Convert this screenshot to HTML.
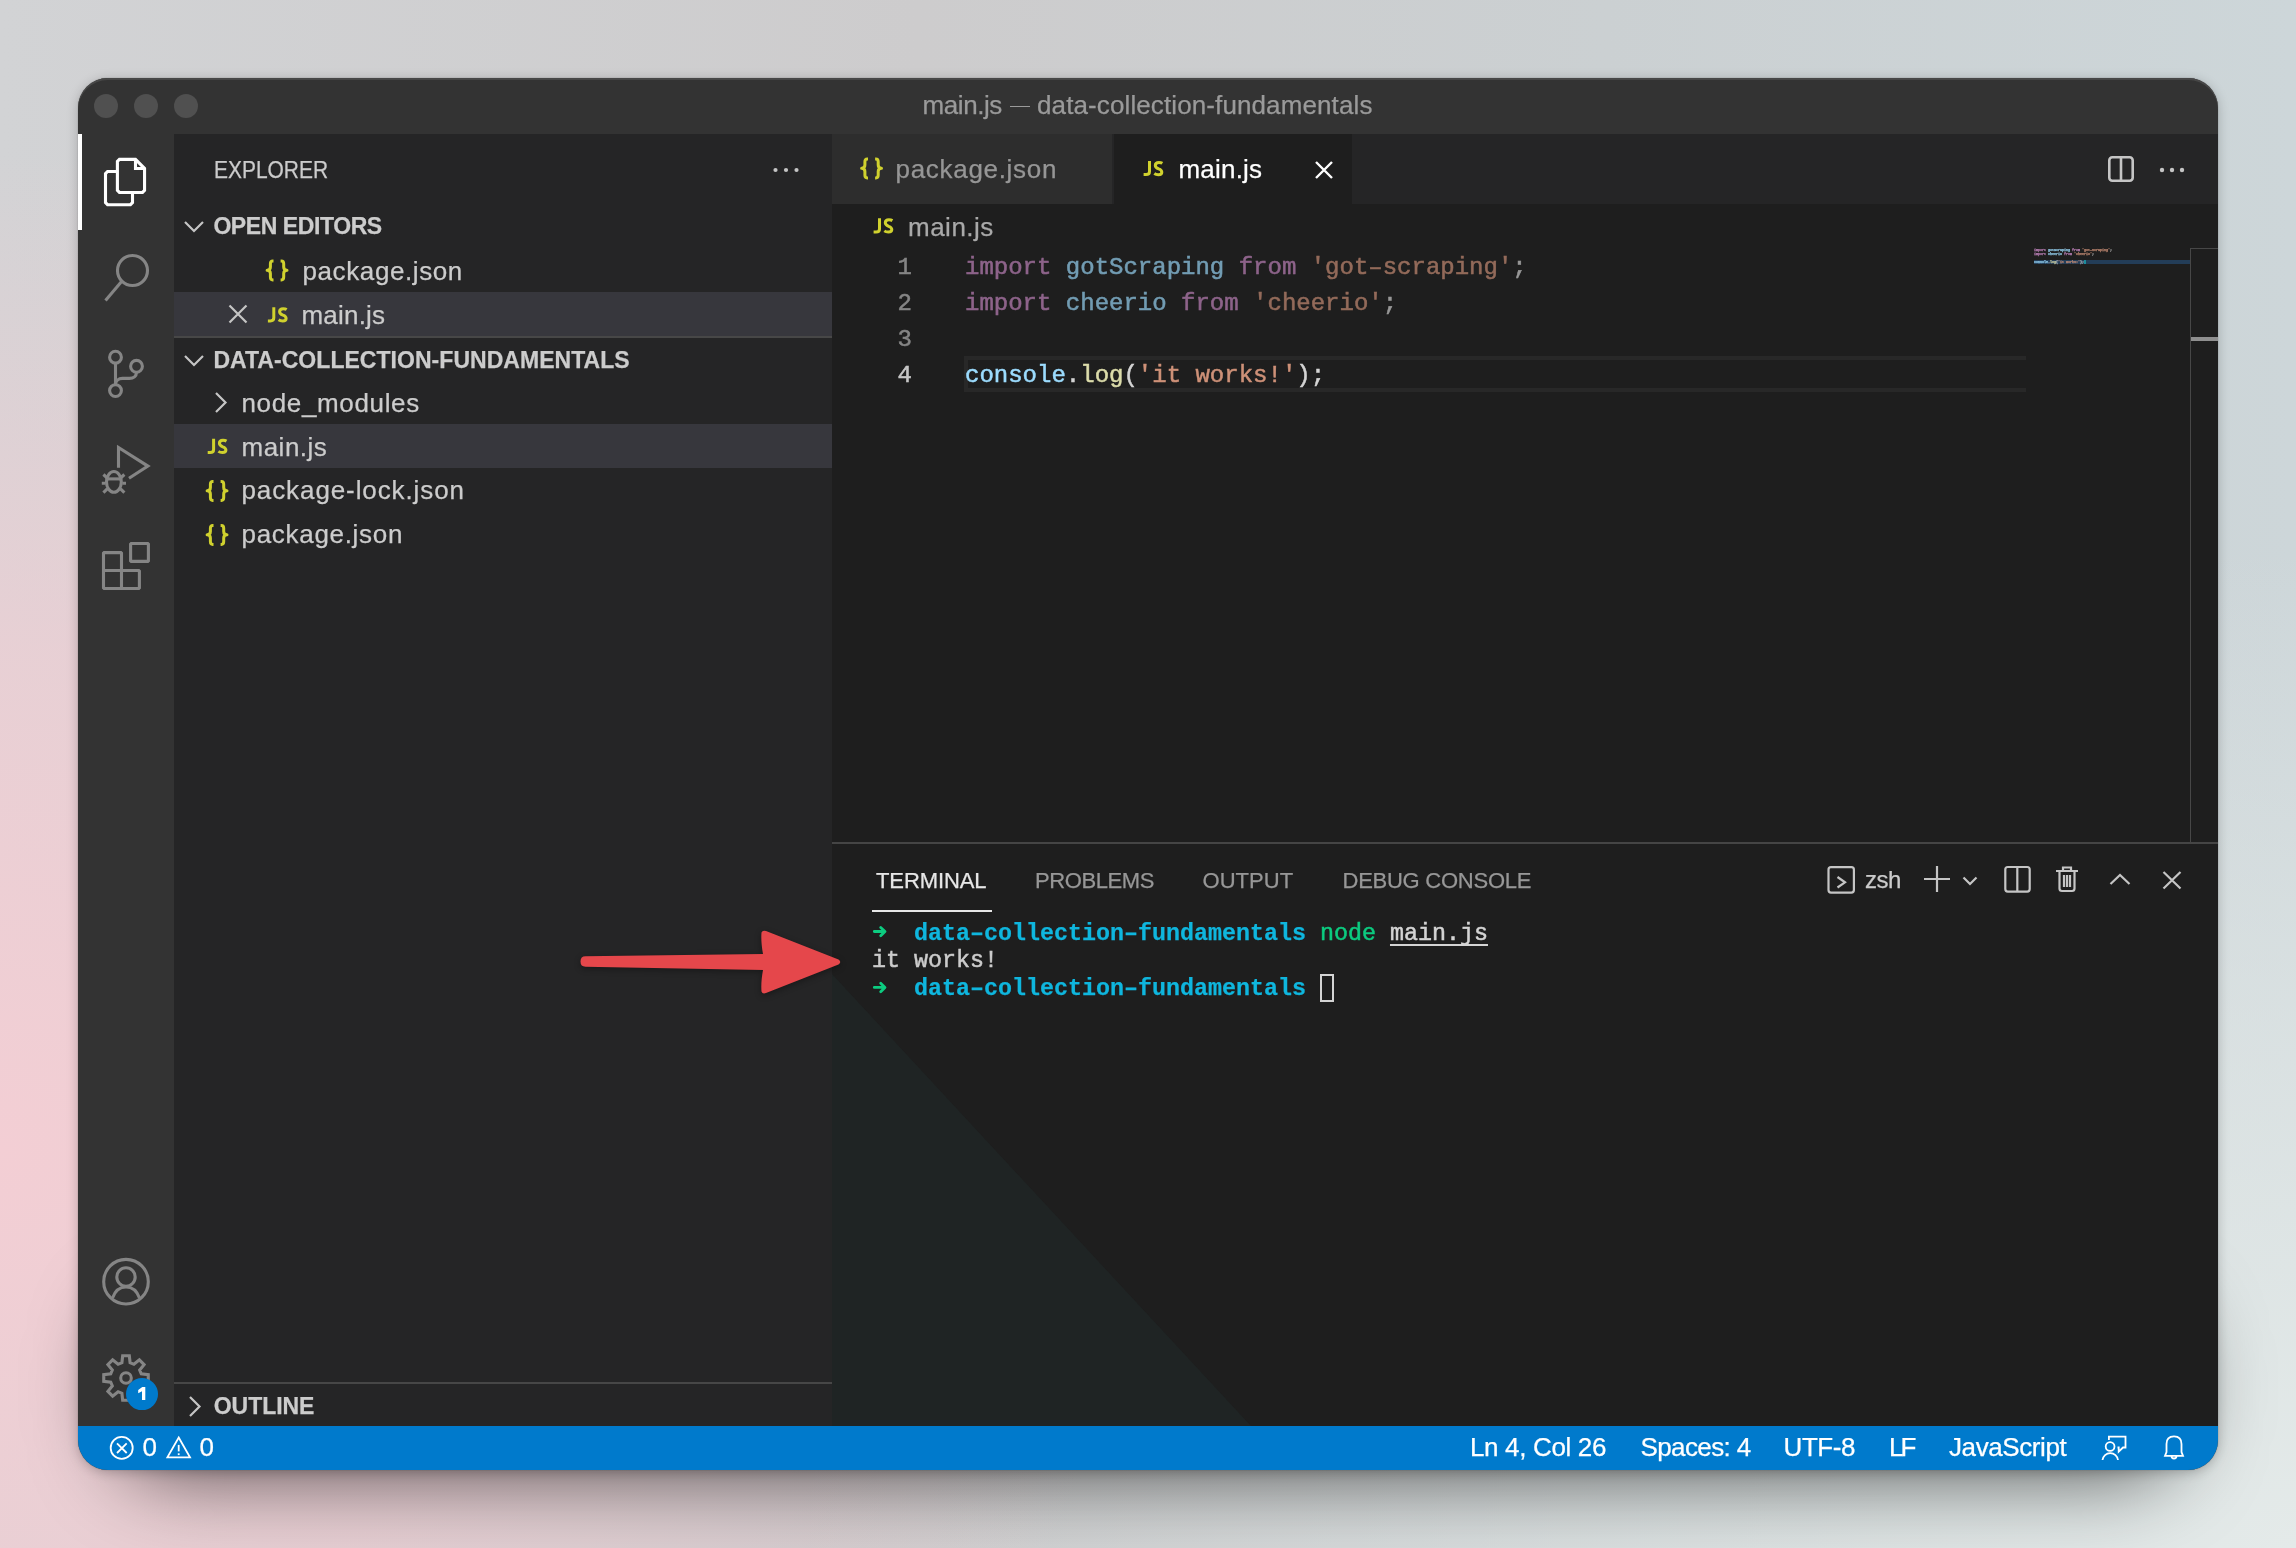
<!DOCTYPE html>
<html><head><meta charset="utf-8"><style>
html,body{margin:0;padding:0;width:2296px;height:1548px;overflow:hidden;}
body{position:relative;background:#d4d4d6;font-family:"Liberation Sans", sans-serif;}
.t{position:absolute;white-space:pre;-webkit-text-stroke:0.25px;}
.r{position:absolute;}
#bg{position:absolute;left:0;top:0;width:2296px;height:1548px;
 background:
  radial-gradient(ellipse 1150px 1000px at 0px 1150px, rgba(243,206,212,1) 0%, rgba(243,206,212,0.65) 50%, rgba(243,206,212,0) 100%),
  radial-gradient(ellipse 1500px 1000px at 2296px 1548px, rgba(228,234,233,1) 0%, rgba(228,234,233,0.55) 50%, rgba(228,234,233,0) 100%),
  linear-gradient(90deg, #d2d3d5 0%, #cdcccd 40%, #cbd0d2 70%, #cdd6d9 100%);}
#shadow{position:absolute;left:78px;top:78px;width:2140px;height:1392px;border-radius:30px;
 box-shadow:0 2px 12px rgba(0,0,0,0.22), 0 0 1px rgba(0,0,0,0.5);}
#shadow2{position:absolute;left:115px;top:1300px;width:2066px;height:175px;border-radius:60px;background:rgba(0,0,0,0.62);filter:blur(42px);}
#win{position:absolute;left:78px;top:78px;width:2140px;height:1392px;border-radius:30px;overflow:hidden;background:#333333;}
#inner{position:absolute;left:-78px;top:-78px;width:2296px;height:1548px;will-change:transform;}
svg{position:absolute;left:0;top:0;}
</style></head><body>
<div id="bg"></div>
<div id="shadow2"></div>
<div id="shadow"></div>
<div id="win"><div id="inner">
<div class="r" style="left:78px;top:78px;width:2140px;height:56px;background:#333333;"></div>
<div class="r" style="left:78px;top:134px;width:96px;height:1292px;background:#333333;"></div>
<div class="r" style="left:174px;top:134px;width:658px;height:1292px;background:#252526;"></div>
<div class="r" style="left:832px;top:134px;width:1386px;height:70px;background:#252526;"></div>
<div class="r" style="left:832px;top:134px;width:280px;height:70px;background:#2d2d2d;"></div>
<div class="r" style="left:1114px;top:134px;width:238px;height:70px;background:#1e1e1e;"></div>
<div class="r" style="left:832px;top:204px;width:1386px;height:638px;background:#1e1e1e;"></div>
<div class="r" style="left:832px;top:842px;width:1386px;height:2px;background:#454545;"></div>
<div class="r" style="left:832px;top:844px;width:1386px;height:582px;background:#1e1e1e;"></div>
<div class="r" style="left:78px;top:1426px;width:2140px;height:44px;background:#007acc;"></div>
<div class="r" style="left:78px;top:134px;width:4px;height:96px;background:#ffffff;"></div>
<div class="r" style="left:174px;top:292px;width:658px;height:44px;background:#37373d;"></div>
<div class="r" style="left:174px;top:424px;width:658px;height:44px;background:#37373d;"></div>
<div class="r" style="left:174px;top:336px;width:658px;height:2px;background:#474747;"></div>
<div class="r" style="left:174px;top:1382px;width:658px;height:2px;background:#474747;"></div>
<div class="r" style="left:964px;top:356px;width:1062px;height:36px;box-sizing:border-box;border:4px solid #282828;border-right:none;"></div>
<svg width="2296" height="1548"><polygon points="832,974 832,1426 1251,1426" fill="#1f2424"/></svg>
<div class="r" style="left:2190px;top:248px;width:1px;height:594px;background:#474747;"></div>
<div class="r" style="left:2190px;top:248px;width:28px;height:1px;background:#474747;"></div>
<div class="r" style="left:2191px;top:337px;width:27px;height:4px;background:#8f8f8f;"></div>
<div class="r" style="left:2034px;top:260px;width:156px;height:4px;background:#233d58;"></div>
<div class="t" style="left:922.60px;top:91.59px;font-size:26px;line-height:26px;color:#9a9a9a;font-weight:400;font-family:'Liberation Sans', sans-serif;letter-spacing:-0.43px;">main.js</div>
<div class="t" style="left:1037.00px;top:91.59px;font-size:26px;line-height:26px;color:#9a9a9a;font-weight:400;font-family:'Liberation Sans', sans-serif;letter-spacing:0.11px;">data-collection-fundamentals</div>
<div class="r" style="left:1010px;top:105.6px;width:19.59999999999991px;height:1.8000000000000114px;background:#9a9a9a;"></div>
<div class="t" style="left:213.80px;top:158.93px;font-size:23px;line-height:23px;color:#cccccc;font-weight:400;font-family:'Liberation Sans', sans-serif;letter-spacing:0.0px;transform:scaleX(0.91);transform-origin:0 0;">EXPLORER</div>
<div class="t" style="left:213.40px;top:215.13px;font-size:23px;line-height:23px;color:#cccccc;font-weight:700;font-family:'Liberation Sans', sans-serif;letter-spacing:-0.42px;">OPEN EDITORS</div>
<div class="t" style="left:302.50px;top:258.49px;font-size:26px;line-height:26px;color:#cccccc;font-weight:400;font-family:'Liberation Sans', sans-serif;letter-spacing:0.6px;">package.json</div>
<div class="t" style="left:301.50px;top:301.99px;font-size:26px;line-height:26px;color:#cccccc;font-weight:400;font-family:'Liberation Sans', sans-serif;letter-spacing:0.2px;">main.js</div>
<div class="t" style="left:213.40px;top:348.63px;font-size:23px;line-height:23px;color:#cccccc;font-weight:700;font-family:'Liberation Sans', sans-serif;letter-spacing:0.04px;">DATA-COLLECTION-FUNDAMENTALS</div>
<div class="t" style="left:241.50px;top:389.99px;font-size:26px;line-height:26px;color:#cccccc;font-weight:400;font-family:'Liberation Sans', sans-serif;letter-spacing:0.65px;">node_modules</div>
<div class="t" style="left:241.50px;top:433.99px;font-size:26px;line-height:26px;color:#cccccc;font-weight:400;font-family:'Liberation Sans', sans-serif;letter-spacing:0.5px;">main.js</div>
<div class="t" style="left:241.50px;top:477.49px;font-size:26px;line-height:26px;color:#cccccc;font-weight:400;font-family:'Liberation Sans', sans-serif;letter-spacing:0.9px;">package-lock.json</div>
<div class="t" style="left:241.50px;top:521.49px;font-size:26px;line-height:26px;color:#cccccc;font-weight:400;font-family:'Liberation Sans', sans-serif;letter-spacing:0.7px;">package.json</div>
<div class="t" style="left:213.70px;top:1394.53px;font-size:23px;line-height:23px;color:#cccccc;font-weight:700;font-family:'Liberation Sans', sans-serif;letter-spacing:-0.03px;">OUTLINE</div>
<div class="t" style="left:895.50px;top:155.99px;font-size:26px;line-height:26px;color:#969696;font-weight:400;font-family:'Liberation Sans', sans-serif;letter-spacing:0.7px;">package.json</div>
<div class="t" style="left:1178.50px;top:155.99px;font-size:26px;line-height:26px;color:#ffffff;font-weight:400;font-family:'Liberation Sans', sans-serif;letter-spacing:0.2px;">main.js</div>
<div class="t" style="left:908.00px;top:213.59px;font-size:26px;line-height:26px;color:#a9a9a9;font-weight:400;font-family:'Liberation Sans', sans-serif;letter-spacing:0.5px;">main.js</div>
<div class="t" style="left:897.50px;top:256.10px;font-size:24px;line-height:24px;color:#858585;font-weight:400;font-family:'Liberation Mono', monospace;letter-spacing:0.0px;-webkit-text-stroke:0.5px;">1</div>
<div class="t" style="left:897.50px;top:292.10px;font-size:24px;line-height:24px;color:#858585;font-weight:400;font-family:'Liberation Mono', monospace;letter-spacing:0.0px;-webkit-text-stroke:0.5px;">2</div>
<div class="t" style="left:897.50px;top:328.10px;font-size:24px;line-height:24px;color:#858585;font-weight:400;font-family:'Liberation Mono', monospace;letter-spacing:0.0px;-webkit-text-stroke:0.5px;">3</div>
<div class="t" style="left:897.50px;top:364.10px;font-size:24px;line-height:24px;color:#c6c6c6;font-weight:400;font-family:'Liberation Mono', monospace;letter-spacing:0.0px;-webkit-text-stroke:0.5px;">4</div>
<div class="t" style="left:965.00px;top:256.10px;font-size:24px;line-height:24px;color:#D4D4D4;font-weight:400;font-family:'Liberation Mono', monospace;letter-spacing:0.0px;opacity:0.667;-webkit-text-stroke:0.5px;"><span style="color:#C586C0">import</span> <span style="color:#9CDCFE">gotScraping</span> <span style="color:#C586C0">from</span> <span style="color:#CE9178">'got–scraping'</span><span style="color:#D4D4D4">;</span></div>
<div class="t" style="left:965.00px;top:292.10px;font-size:24px;line-height:24px;color:#D4D4D4;font-weight:400;font-family:'Liberation Mono', monospace;letter-spacing:0.0px;opacity:0.667;-webkit-text-stroke:0.5px;"><span style="color:#C586C0">import</span> <span style="color:#9CDCFE">cheerio</span> <span style="color:#C586C0">from</span> <span style="color:#CE9178">'cheerio'</span><span style="color:#D4D4D4">;</span></div>
<div class="t" style="left:965.00px;top:364.10px;font-size:24px;line-height:24px;color:#D4D4D4;font-weight:400;font-family:'Liberation Mono', monospace;letter-spacing:0.0px;-webkit-text-stroke:0.5px;"><span style="color:#9CDCFE">console</span><span style="color:#D4D4D4">.</span><span style="color:#DCDCAA">log</span><span style="color:#D4D4D4">(</span><span style="color:#CE9178">'it works!'</span><span style="color:#D4D4D4">);</span></div>
<div class="t" style="left:876.00px;top:869.88px;font-size:22px;line-height:22px;color:#e7e7e7;font-weight:400;font-family:'Liberation Sans', sans-serif;letter-spacing:-0.1px;">TERMINAL</div>
<div class="t" style="left:1035.00px;top:869.88px;font-size:22px;line-height:22px;color:#979797;font-weight:400;font-family:'Liberation Sans', sans-serif;letter-spacing:-0.4px;">PROBLEMS</div>
<div class="t" style="left:1202.50px;top:869.88px;font-size:22px;line-height:22px;color:#979797;font-weight:400;font-family:'Liberation Sans', sans-serif;letter-spacing:0.05px;">OUTPUT</div>
<div class="t" style="left:1342.50px;top:869.88px;font-size:22px;line-height:22px;color:#979797;font-weight:400;font-family:'Liberation Sans', sans-serif;letter-spacing:-0.25px;">DEBUG CONSOLE</div>
<div class="r" style="left:872px;top:910px;width:120px;height:2px;background:#e7e7e7;"></div>
<div class="t" style="left:1865.00px;top:868.08px;font-size:24px;line-height:24px;color:#cccccc;font-weight:400;font-family:'Liberation Sans', sans-serif;letter-spacing:-0.5px;">zsh</div>
<div class="t" style="left:872.00px;top:922.62px;font-size:23.33px;line-height:23.33px;color:#cccccc;font-weight:700;font-family:'Liberation Mono', monospace;letter-spacing:0.0px;">   <span style="color:#0fb6de">data–collection–fundamentals</span> <span style="color:#0ccc80;font-weight:400;-webkit-text-stroke:0.5px">node</span> <span style="color:#d4d4d4;font-weight:400;-webkit-text-stroke:0.5px;text-decoration:underline;text-decoration-thickness:2px;text-underline-offset:4px;text-decoration-skip-ink:none">main.js</span></div>
<div class="t" style="left:872.00px;top:950.12px;font-size:23.33px;line-height:23.33px;color:#cccccc;font-weight:400;font-family:'Liberation Mono', monospace;letter-spacing:0.0px;-webkit-text-stroke:0.5px;">it works!</div>
<div class="t" style="left:872.00px;top:978.12px;font-size:23.33px;line-height:23.33px;color:#cccccc;font-weight:700;font-family:'Liberation Mono', monospace;letter-spacing:0.0px;">   <span style="color:#0fb6de">data–collection–fundamentals</span> </div>
<div class="r" style="left:1320px;top:974px;width:14px;height:28px;box-sizing:border-box;border:2px solid #d4d4d4;"></div>
<svg width="2296" height="1548" fill="none" stroke="#0ccc80" stroke-width="2.8" stroke-linecap="round" stroke-linejoin="round"><path d="M874.3 931.5 H884.5 M880.7 927.4 L885 931.5 L880.7 935.8"/><path d="M874.3 987.4 H884.5 M880.7 983.3 L885 987.4 L880.7 991.7"/></svg>
<div class="t" style="left:142.50px;top:1434.49px;font-size:26px;line-height:26px;color:#ffffff;font-weight:400;font-family:'Liberation Sans', sans-serif;letter-spacing:0.0px;">0</div>
<div class="t" style="left:199.50px;top:1434.49px;font-size:26px;line-height:26px;color:#ffffff;font-weight:400;font-family:'Liberation Sans', sans-serif;letter-spacing:0.0px;">0</div>
<div class="t" style="left:1470.00px;top:1434.49px;font-size:26px;line-height:26px;color:#ffffff;font-weight:400;font-family:'Liberation Sans', sans-serif;letter-spacing:-0.35px;">Ln 4, Col 26</div>
<div class="t" style="left:1640.50px;top:1434.49px;font-size:26px;line-height:26px;color:#ffffff;font-weight:400;font-family:'Liberation Sans', sans-serif;letter-spacing:-0.6px;">Spaces: 4</div>
<div class="t" style="left:1783.50px;top:1434.49px;font-size:26px;line-height:26px;color:#ffffff;font-weight:400;font-family:'Liberation Sans', sans-serif;letter-spacing:-0.4px;">UTF-8</div>
<div class="t" style="left:1889.00px;top:1434.49px;font-size:26px;line-height:26px;color:#ffffff;font-weight:400;font-family:'Liberation Sans', sans-serif;letter-spacing:-3px;">LF</div>
<div class="t" style="left:1949.00px;top:1434.49px;font-size:26px;line-height:26px;color:#ffffff;font-weight:400;font-family:'Liberation Sans', sans-serif;letter-spacing:-0.4px;">JavaScript</div>
<svg width="2296" height="1548" fill="none" stroke-linecap="butt" stroke-linejoin="miter"><circle cx="106" cy="106" r="12" fill="#505050"/><circle cx="146" cy="106" r="12" fill="#505050"/><circle cx="186" cy="106" r="12" fill="#505050"/><g stroke="#ffffff" stroke-width="3.1"><path d="M117.4 161.4 L119.45 159.35 L135.5 159.35 L144.55 168.4 L144.55 190.4 L142.5 192.45 L119.45 192.45 L117.4 190.4 Z"/><path d="M135.5 159.35 L135.5 168.5 L144.55 168.5"/><path d="M117.4 171.5 L107.55 171.5 L105.5 173.55 L105.5 202.65 L107.55 204.7 L130.45 204.7 L132.5 202.65 L132.5 192.45"/></g><g stroke="#858585" stroke-width="3.1"><circle cx="132.5" cy="270.5" r="15"/><path d="M122 281 L105.5 300.5"/><circle cx="115.5" cy="357.2" r="5.9"/><circle cx="136.5" cy="366.3" r="5.9"/><circle cx="115.5" cy="390.6" r="5.9"/><path d="M115.5 363.1 L115.5 384.7"/><path d="M136.5 372.2 C136.5 376.2 133.5 378.4 129.5 378.4 L122.5 378.4 C118.5 378.4 115.5 381 115.5 384.7"/><path d="M118.5 467.8 L118.5 447.5 L147.9 466.1 L129 478.3"/><ellipse cx="113.9" cy="481.9" rx="7.4" ry="10.4"/><path d="M106.5 478.9 L121.3 478.9"/><path d="M103.4 474.5 L107.8 478.5 M124.4 474.5 L120 478.5 M101.8 483.3 L105.5 483.3 M122.3 483.3 L126 483.3 M103.4 492.6 L107.5 488.6 M124.4 492.6 L120.3 488.6"/><g stroke-linejoin="bevel"><path d="M103.5 552.6 L121.5 552.6 L121.5 570.5 L139.4 570.5 L139.4 588.5 L103.5 588.5 Z M103.5 570.5 L121.5 570.5 M121.5 570.5 L121.5 588.5"/><rect x="130.6" y="543.5" width="17.8" height="17.9"/></g><circle cx="126" cy="1281.7" r="22.3"/><circle cx="126" cy="1277" r="9.2"/><path d="M112.5 1298 C115 1291 120 1287 126 1287 C132 1287 137 1291 139.5 1298"/><polygon points="121.91,1362.74 122.67,1355.75 129.33,1355.75 130.09,1362.74 133.90,1364.32 139.38,1359.91 144.09,1364.62 139.68,1370.10 141.26,1373.91 148.25,1374.67 148.25,1381.33 141.26,1382.09 139.68,1385.90 144.09,1391.38 139.38,1396.09 133.90,1391.68 130.09,1393.26 129.33,1400.25 122.67,1400.25 121.91,1393.26 118.10,1391.68 112.62,1396.09 107.91,1391.38 112.32,1385.90 110.74,1382.09 103.75,1381.33 103.75,1374.67 110.74,1373.91 112.32,1370.10 107.91,1364.62 112.62,1359.91 118.10,1364.32"/><circle cx="126" cy="1378" r="5.3"/></g><circle cx="142" cy="1394.1" r="16" fill="#007acc"/><g stroke="#c5c5c5" stroke-width="2.2"><path d="M185 222 L194 231 L203 222"/><path d="M185 356 L194 365 L203 356"/><path d="M216 393 L225.5 402.5 L216 412"/><path d="M190 1397 L199.5 1406.5 L190 1416"/><path d="M229.5 305.5 L246.5 322.5 M246.5 305.5 L229.5 322.5"/></g><circle cx="775.5" cy="170" r="2.1" fill="#c5c5c5"/><circle cx="786" cy="170" r="2.1" fill="#c5c5c5"/><circle cx="796.5" cy="170" r="2.1" fill="#c5c5c5"/><g stroke="#c5c5c5" stroke-width="2.6"><rect x="2109.3" y="157.3" width="23.4" height="23.4" rx="3"/><path d="M2121 157.3 V180.7"/></g><circle cx="2162" cy="170" r="2.2" fill="#c5c5c5"/><circle cx="2172" cy="170" r="2.2" fill="#c5c5c5"/><circle cx="2182" cy="170" r="2.2" fill="#c5c5c5"/><path d="M1316 162 L1332 178 M1332 162 L1316 178" stroke="#ffffff" stroke-width="2.4"/><g stroke="#c5c5c5" stroke-width="2.2"><rect x="1828.5" y="867.2" width="25.4" height="25.4" rx="2.5"/><path d="M1837.5 877 L1845 882.3 L1837.5 887.5"/><path d="M1924 879 H1950 M1937 866 V892"/><path d="M1963.5 877.5 L1970 884 L1976.5 877.5"/><rect x="2005.3" y="867" width="24.4" height="24.6" rx="2.5"/><path d="M2017.3 867 V891.6"/><path d="M2056 871 H2078 M2063 871 V867.5 H2071 V871 M2059.5 871 V888.5 Q2059.5 891 2062 891 H2072 Q2074.5 891 2074.5 888.5 V871 M2064 875 V887 M2067 875 V887 M2070 875 V887"/><path d="M2110.5 884 L2120 875 L2129.5 884"/><path d="M2163.5 872 L2180.5 888.5 M2180.5 872 L2163.5 888.5"/></g><g stroke="#ffffff" stroke-width="1.8"><circle cx="121.7" cy="1447.9" r="11"/><path d="M117 1443.3 L126.7 1453 M126.7 1443.3 L117 1453"/><path d="M178.7 1437.5 L190 1457.4 L167.4 1457.4 Z"/><path d="M178.7 1444.9 V1451.4"/><path d="M2108.9 1440 V1436.6 H2125.5 V1447.5 H2123 L2118.7 1451.6 V1447.5 H2117.5"/><circle cx="2110.1" cy="1446.5" r="4.4"/><path d="M2102.5 1460 A7.8 7.8 0 0 1 2118 1460"/><path d="M2165 1455.8 L2166.5 1452 L2166.5 1444 C2166.5 1439 2169.5 1436.4 2174 1436.4 C2178.5 1436.4 2181.5 1439 2181.5 1444 L2181.5 1452 L2183 1455.8 Z M2171.5 1456 A2.5 2.5 0 0 0 2176.5 1456"/></g><rect x="177.8" y="1453.3" width="1.8" height="1.8" fill="#fff"/><path d="M585.5 956.3 L763 954 C761.5 946 761 938 761.5 932.5 Q762.5 929.8 766 931 L838.5 959.5 Q842 962 838.5 964.5 L766 993 Q762.5 994.3 761.5 991.5 C761 986 761.5 978 763 970 L585.5 966.7 Q580.5 966.7 580.5 961.5 Q580.5 956.3 585.5 956.3 Z" fill="#e5474b" stroke="none" style="filter:drop-shadow(0 2px 3px rgba(0,0,0,0.35))"/></svg>
<svg width="2296" height="1548"><polygon points="142.3,1387 145.3,1387 145.3,1400 142,1400 142,1391.2 138.2,1393.2 138.2,1390 " fill="#ffffff"/></svg>
<svg width="2296" height="1548" fill="none" stroke="#d0d12e" stroke-width="3" stroke-linejoin="round"><g transform="translate(1143.5,160.9)"><path d="M6 0 V10.6 C6 12.9 4.5 13.7 2.5 13.7 L0.1 13.7"/><path d="M18.9 2.3 C17.6 1.5 16.4 1.5 15.4 1.5 C13.2 1.5 11.8 2.7 11.8 4.5 C11.8 6.5 13.5 7.3 15.2 8 C17.1 8.7 18.3 9.7 18.3 11.3 C18.3 13.1 16.8 13.8 14.8 13.8 C13.3 13.8 11.9 13.4 10.8 12.6"/></g><g transform="translate(873.5,218.3)"><path d="M6 0 V10.6 C6 12.9 4.5 13.7 2.5 13.7 L0.1 13.7"/><path d="M18.9 2.3 C17.6 1.5 16.4 1.5 15.4 1.5 C13.2 1.5 11.8 2.7 11.8 4.5 C11.8 6.5 13.5 7.3 15.2 8 C17.1 8.7 18.3 9.7 18.3 11.3 C18.3 13.1 16.8 13.8 14.8 13.8 C13.3 13.8 11.9 13.4 10.8 12.6"/></g><g transform="translate(267.8,307.2)"><path d="M6 0 V10.6 C6 12.9 4.5 13.7 2.5 13.7 L0.1 13.7"/><path d="M18.9 2.3 C17.6 1.5 16.4 1.5 15.4 1.5 C13.2 1.5 11.8 2.7 11.8 4.5 C11.8 6.5 13.5 7.3 15.2 8 C17.1 8.7 18.3 9.7 18.3 11.3 C18.3 13.1 16.8 13.8 14.8 13.8 C13.3 13.8 11.9 13.4 10.8 12.6"/></g><g transform="translate(207.6,438.8)"><path d="M6 0 V10.6 C6 12.9 4.5 13.7 2.5 13.7 L0.1 13.7"/><path d="M18.9 2.3 C17.6 1.5 16.4 1.5 15.4 1.5 C13.2 1.5 11.8 2.7 11.8 4.5 C11.8 6.5 13.5 7.3 15.2 8 C17.1 8.7 18.3 9.7 18.3 11.3 C18.3 13.1 16.8 13.8 14.8 13.8 C13.3 13.8 11.9 13.4 10.8 12.6"/></g><g transform="translate(861,157.5)"><path d="M7 1.5 L6.2 1.5 C4.6 1.5 3.9 2.5 3.9 4.3 L3.9 7.6 C3.9 9.6 3 10.8 0.6 10.8 C3 10.8 3.9 12 3.9 14 L3.9 17.5 C3.9 19.4 4.6 20.4 6.2 20.4 L7 20.4"/><path d="M14.1 1.5 L14.9 1.5 C16.5 1.5 17.2 2.5 17.2 4.3 L17.2 7.6 C17.2 9.6 18.1 10.8 20.5 10.8 C18.1 10.8 17.2 12 17.2 14 L17.2 17.5 C17.2 19.4 16.5 20.4 14.9 20.4 L14.1 20.4"/></g><g transform="translate(266.5,259.5)"><path d="M7 1.5 L6.2 1.5 C4.6 1.5 3.9 2.5 3.9 4.3 L3.9 7.6 C3.9 9.6 3 10.8 0.6 10.8 C3 10.8 3.9 12 3.9 14 L3.9 17.5 C3.9 19.4 4.6 20.4 6.2 20.4 L7 20.4"/><path d="M14.1 1.5 L14.9 1.5 C16.5 1.5 17.2 2.5 17.2 4.3 L17.2 7.6 C17.2 9.6 18.1 10.8 20.5 10.8 C18.1 10.8 17.2 12 17.2 14 L17.2 17.5 C17.2 19.4 16.5 20.4 14.9 20.4 L14.1 20.4"/></g><g transform="translate(206.5,480)"><path d="M7 1.5 L6.2 1.5 C4.6 1.5 3.9 2.5 3.9 4.3 L3.9 7.6 C3.9 9.6 3 10.8 0.6 10.8 C3 10.8 3.9 12 3.9 14 L3.9 17.5 C3.9 19.4 4.6 20.4 6.2 20.4 L7 20.4"/><path d="M14.1 1.5 L14.9 1.5 C16.5 1.5 17.2 2.5 17.2 4.3 L17.2 7.6 C17.2 9.6 18.1 10.8 20.5 10.8 C18.1 10.8 17.2 12 17.2 14 L17.2 17.5 C17.2 19.4 16.5 20.4 14.9 20.4 L14.1 20.4"/></g><g transform="translate(206.5,524)"><path d="M7 1.5 L6.2 1.5 C4.6 1.5 3.9 2.5 3.9 4.3 L3.9 7.6 C3.9 9.6 3 10.8 0.6 10.8 C3 10.8 3.9 12 3.9 14 L3.9 17.5 C3.9 19.4 4.6 20.4 6.2 20.4 L7 20.4"/><path d="M14.1 1.5 L14.9 1.5 C16.5 1.5 17.2 2.5 17.2 4.3 L17.2 7.6 C17.2 9.6 18.1 10.8 20.5 10.8 C18.1 10.8 17.2 12 17.2 14 L17.2 17.5 C17.2 19.4 16.5 20.4 14.9 20.4 L14.1 20.4"/></g></svg>
<div class="t" style="left:2034px;top:247.8px;font-size:3.34px;line-height:4px;font-family:'Liberation Mono',monospace;font-weight:700;opacity:0.85"><span style="color:#C586C0">import</span> <span style="color:#9CDCFE">gotScraping</span> <span style="color:#C586C0">from</span> <span style="color:#CE9178">'got–scraping'</span><span style="color:#D4D4D4">;</span><br><span style="color:#C586C0">import</span> <span style="color:#9CDCFE">cheerio</span> <span style="color:#C586C0">from</span> <span style="color:#CE9178">'cheerio'</span><span style="color:#D4D4D4">;</span><br><br><span style="color:#9CDCFE">console</span><span style="color:#D4D4D4">.</span><span style="color:#DCDCAA">log</span><span style="color:#D4D4D4">(</span><span style="color:#CE9178">'it works!'</span><span style="color:#D4D4D4">);</span></div>
<div class="r" style="left:2084px;top:260px;width:2px;height:4px;background:#1a8c9c;"></div>
</div></div>
<div style="position:absolute;left:78px;top:78px;width:2140px;height:1392px;border-radius:30px;box-shadow:inset 0 2px 0 rgba(255,255,255,0.10);pointer-events:none"></div>
</body></html>
